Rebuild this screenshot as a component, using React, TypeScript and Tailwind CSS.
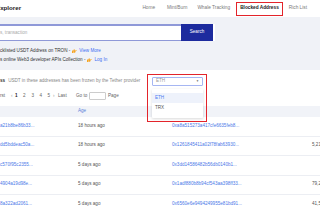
import type React from "react"

const Hand: React.FC = () => (
  <svg width="5" height="4" viewBox="0 0 10 8" className="inline-block mx-[2px] align-middle">
    <path d="M0 3h2v5H0z M2.5 2.5C3.5 1.5 4 0.5 4.8 0.4c0.8 0 0.7 1 0.3 2h4.2c0.9 0 0.9 1.3 0 1.3H6.5v0.9h0.8c0.7 0 0.7 1.1 0 1.1h-0.6v0.9c0 0.5-0.4 0.9-0.9 0.9H2.5z" fill="#f5a524" />
  </svg>
)

const rows = [
  { hash: "a21b8be86b33...", age: "18 hours ago", addr: "0xa8a515273a417cfe6635feb8...", amt: "" },
  { hash: "dd5bddeac50a...", age: "18 hours ago", addr: "0x1261845411a02f78fab63930...", amt: "5,210.00" },
  { hash: "c570f95c2355...", age: "5 days ago", addr: "0x3dd14586482b56db0140b1...", amt: "" },
  { hash: "4904a19d98e...", age: "5 days ago", addr: "0x1adf880b8b94cf543aa398ff33...", amt: "79,200.00" },
  { hash: "8a322ad2061...", age: "5 days ago", addr: "0x6560e6e9494249955e81bd91...", amt: "41,500.00" },
]

const nav = ["Home", "Mint/Burn", "Whale Tracking", "Blocked Address", "Rich List"]

export default function App() {
  return (
    <div className="relative w-[320px] h-[214px] overflow-hidden bg-[#f0f2f7] font-['Liberation_Sans',Arial,sans-serif] leading-none">
      {/* top bar */}
      <header className="h-[17px] bg-white flex items-center">
        <div className="-ml-[4px] text-[6.2px] font-bold text-[#222]">Explorer</div>
        <nav className="ml-auto mr-[9px] flex items-center gap-[2px] text-[4.75px] text-[#7a7a7a]">
          {nav.map((n) => (
            <div
              key={n}
              className={
                n === "Blocked Address"
                  ? "h-[14px] px-[3px] flex items-center border-[1.5px] border-[#e3242b] font-bold text-[#222]"
                  : n === "Home"
                    ? "h-[14px] px-[4px] mr-[2px] flex items-center"
                    : "h-[14px] px-[4px] flex items-center"
              }
            >
              {n}
            </div>
          ))}
        </nav>
      </header>

      {/* search */}
      <div className="pt-[7px]">
        <div className="flex w-[215px] h-[17px] bg-white pr-[2px]">
          <div className="flex-1 border-t-2 border-b border-[#8f99d8] flex items-center text-[4.6px] text-[#aaa]">
            s, transaction
          </div>
          <button className="w-[32px] bg-[#1d2b9e] text-white text-[4.6px]">Search</button>
        </div>
        <div className="mt-[5px] text-[4.6px] leading-[9px] text-[#333]">
          <div>
            cklisted USDT Address on TRON -<Hand />
            <span className="text-[#3d6df2]">View More</span>
          </div>
          <div>
            s online Web3 developer APIs Collection -<Hand />
            <span className="text-[#3d6df2]">Log In</span>
          </div>
        </div>
      </div>

      {/* card */}
      <div className="mt-[6px] bg-white h-[144px] pt-[7px]">
        <div className="flex items-center h-[9px] text-[4.6px]">
          <div className="w-[152px] flex">
            <span className="font-bold text-[#333]">ss</span>
            <span className="ml-[3px] text-[#888]">USDT in these addresses has been frozen by the Tether provider</span>
          </div>
          <div className="w-[51px] h-[9px] border border-[#a6b6f2] rounded-[1px] flex items-center justify-between px-[3px] text-[#999]">
            <span>ETH</span>
            <span className="text-[3px] text-[#666]">▼</span>
          </div>
        </div>

        <div className="mt-[5px] h-[10px] flex items-center text-[4.6px] text-[#666]">
          <span className="w-[11px]">rst</span>
          <span className="w-[4px] text-[#999]">‹</span>
          <span className="w-[8px] font-bold text-[#222]">1</span>
          <span className="w-[8.5px]">2</span>
          <span className="w-[8px]">3</span>
          <span className="w-[8px]">4</span>
          <span className="w-[5.5px]">5</span>
          <span className="w-[5px] text-[#999]">›</span>
          <span className="w-[18px]">Last</span>
          <span className="w-[13px]">Go to</span>
          <span className="w-[17px] h-[8px] border border-[#ccc] rounded-[1px] bg-white" />
          <span className="ml-[2px]">Page</span>
        </div>

        <div className="mt-[5px] h-[11px] bg-[#f1f3f8] grid grid-cols-[78px_94px_140px_1fr] items-center text-[4.6px] text-[#5a7fd8]">
          <span />
          <span>Age</span>
          <span>Address</span>
          <span />
        </div>

        {rows.map((r) => (
          <div
            key={r.hash}
            className="h-[19.5px] border-b border-[#eceef3] grid grid-cols-[78px_94px_140px_1fr] items-center text-[4.6px] whitespace-nowrap"
          >
            <span className="text-[#4a78e8]">{r.hash}</span>
            <span className="text-[#555]">{r.age}</span>
            <span className="text-[#4a78e8]">{r.addr}</span>
            <span className="text-[#555]">{r.amt}</span>
          </div>
        ))}
      </div>

      {/* open dropdown */}
      <div className="absolute left-[152px] top-[89px] w-[51px] h-[29px] bg-white rounded-[1px] shadow-[0_1px_3px_rgba(0,0,0,0.15)] pt-[4px] text-[4.6px]">
        <div className="h-[10px] bg-[#eef2fb] flex items-center px-[3px] text-[#4d7cf2]">ETH</div>
        <div className="h-[10px] flex items-center px-[3px] text-[#555]">TRX</div>
      </div>

      {/* highlight box */}
      <div className="absolute left-[147px] top-[74px] w-[60px] h-[48px] border-[1.5px] border-[#e3242b]" />
    </div>
  )
}
